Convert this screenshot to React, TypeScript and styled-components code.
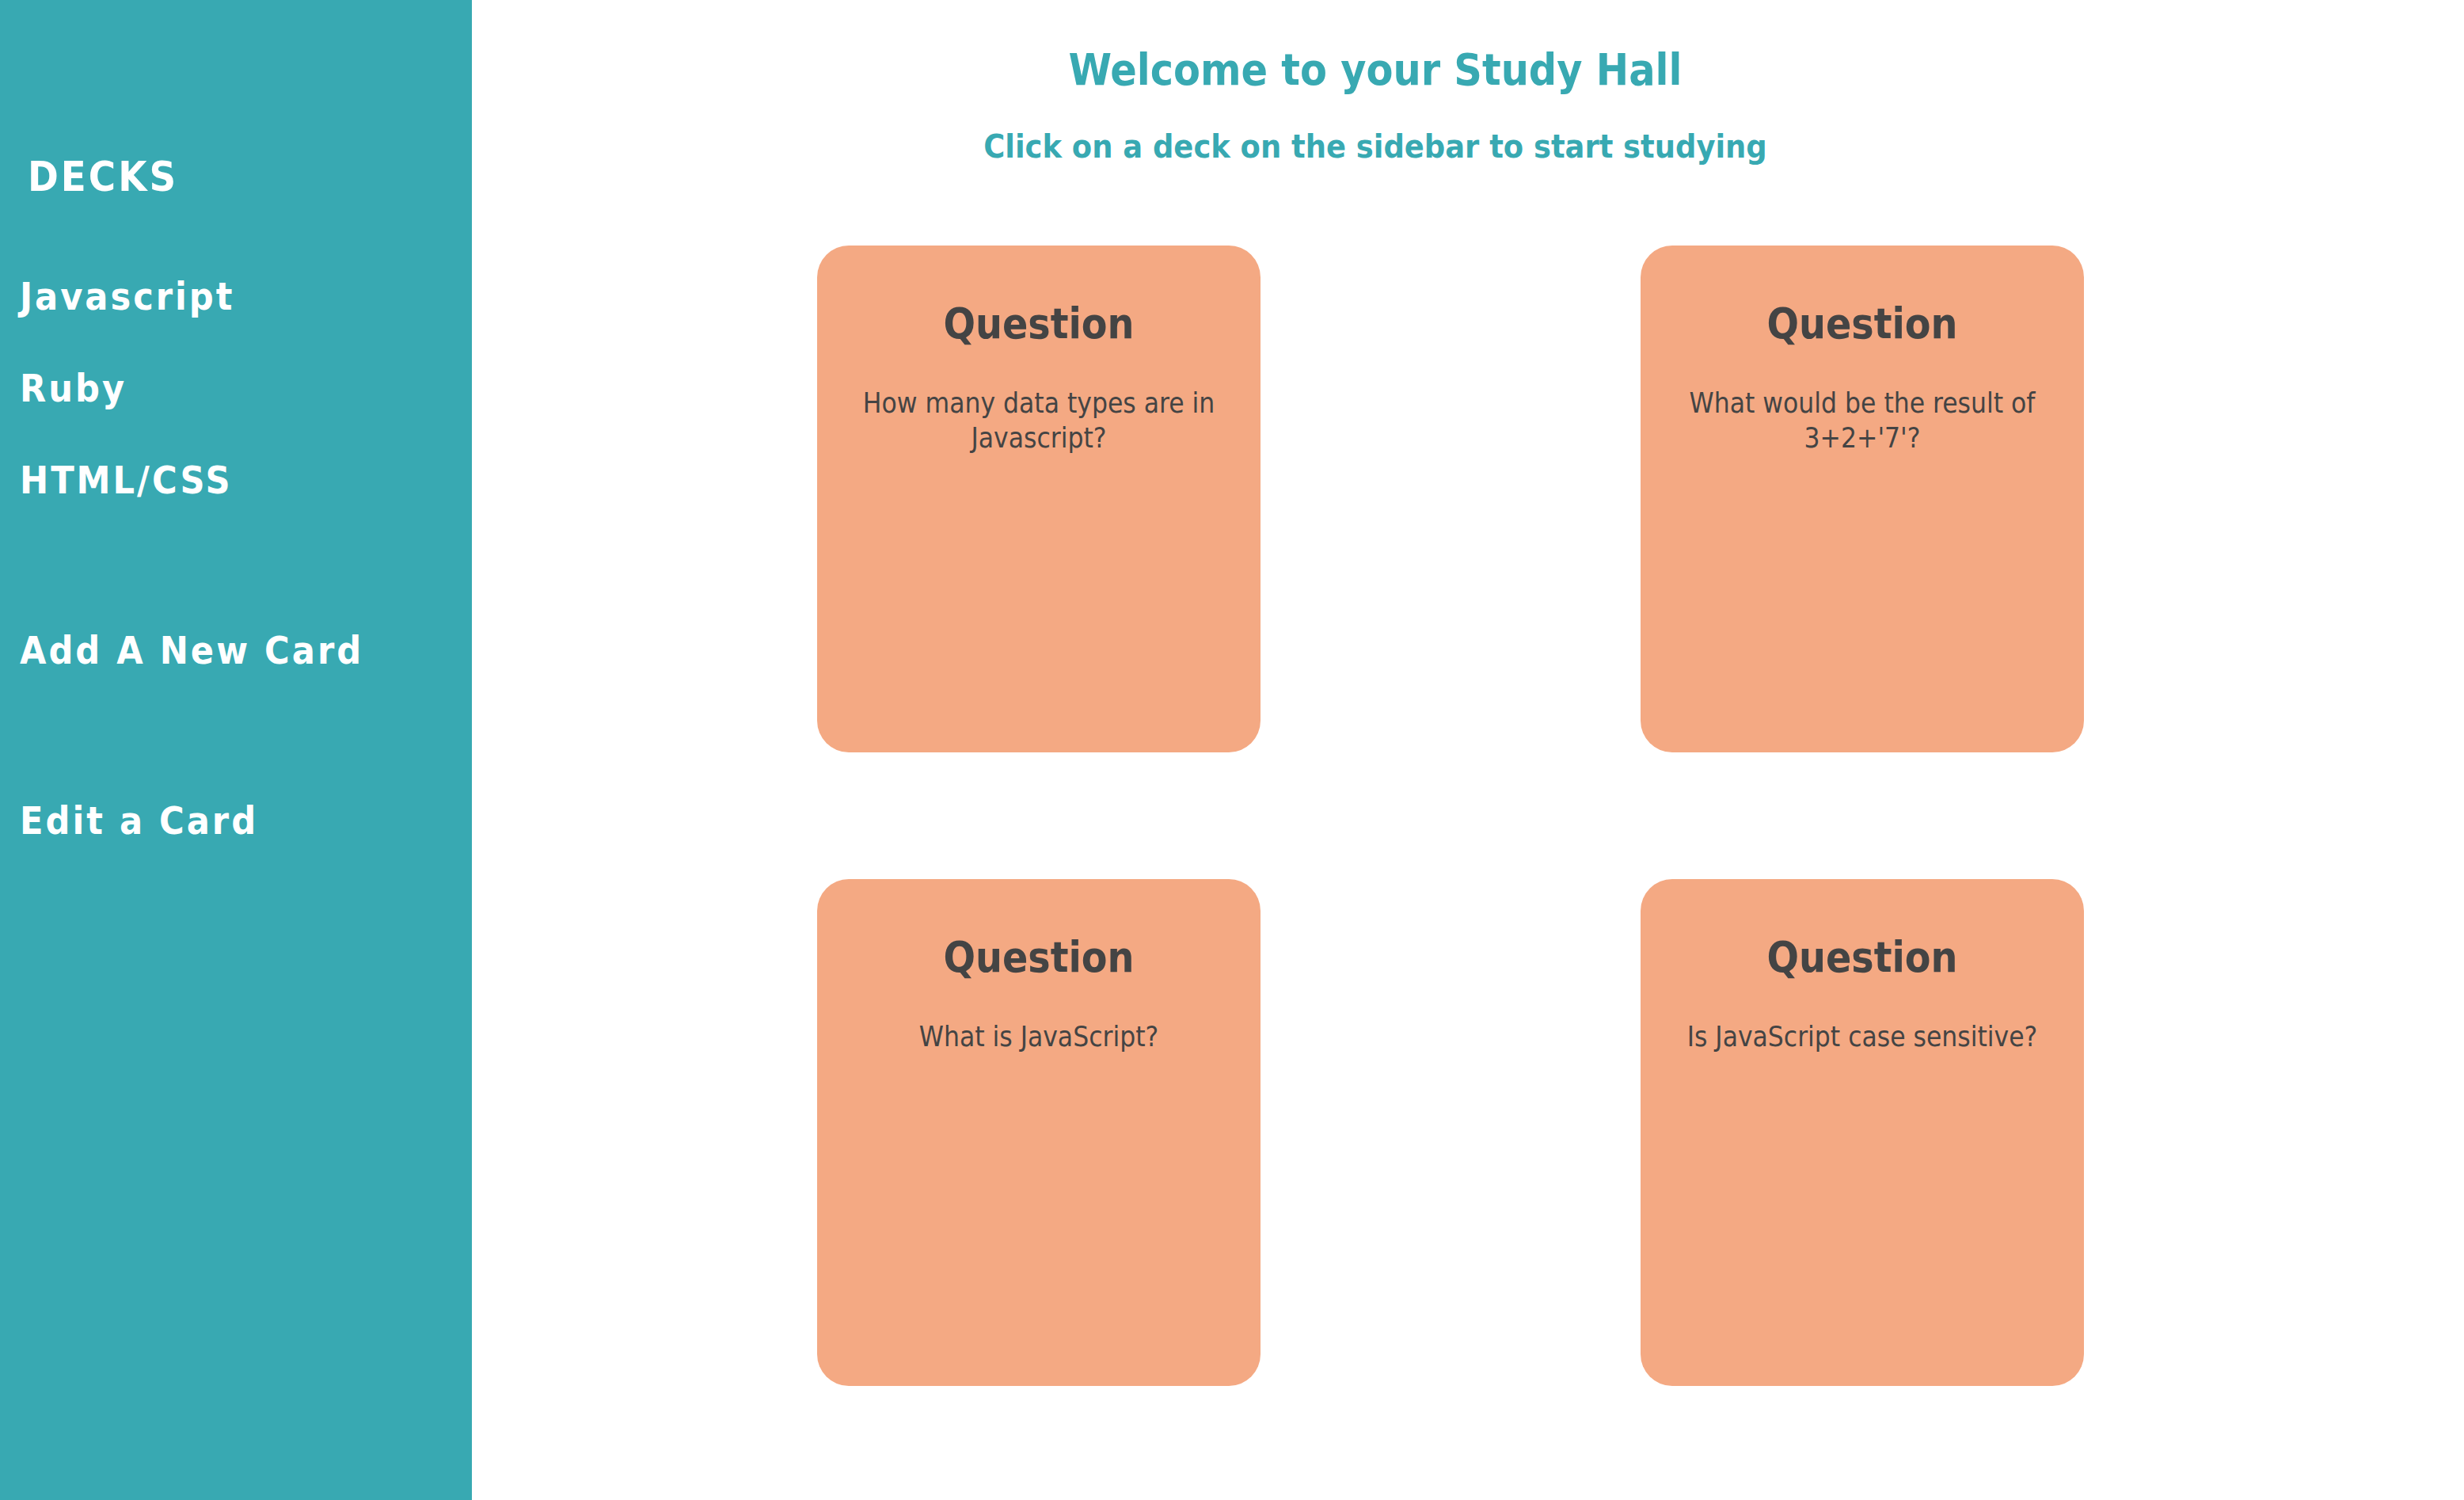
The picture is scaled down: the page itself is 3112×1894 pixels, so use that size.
import React from 'react';
import styled, { createGlobalStyle } from 'styled-components';

const teal = '#38a9b2';
const peach = '#f4a983';
const ink = '#444444';

const GlobalStyle = createGlobalStyle`
  *, *::before, *::after { box-sizing: border-box; }
  body {
    margin: 0;
    background: #ffffff;
    color: ${ink};
    font-family: Tahoma, "DejaVu Sans Condensed", "DejaVu Sans", sans-serif;
  }
  h1, h2, h3, p, ul { margin: 0; padding: 0; }
`;

const Page = styled.div`
  display: flex;
  min-height: 100vh;
`;

const Sidebar = styled.nav`
  flex: 0 0 596px;
  padding: 192px 25px 0;
  background: ${teal};
  color: #ffffff;
  letter-spacing: 3px;
`;

const SidebarTitle = styled.h2`
  padding-left: 10px;
  margin-bottom: 91px;
  font-size: 52px;
  line-height: 62px;
  font-weight: 700;
`;

const LinkGroup = styled.ul`
  display: flex;
  flex-direction: column;
  gap: 58px;
  margin-bottom: 157px;
  list-style: none;
`;

const SidebarLink = styled.a`
  display: block;
  color: inherit;
  font-size: 48px;
  line-height: 58px;
  font-weight: 700;
  text-decoration: none;
`;

const Main = styled.main`
  flex: 1;
  min-width: 0;
  padding: 53px 234px 80px 0;
`;

const Header = styled.header`
  display: flex;
  flex-direction: column;
  gap: 37px;
  margin-bottom: 100px;
  color: ${teal};
  text-align: center;
`;

const Title = styled.h1`
  font-size: 55px;
  line-height: 70px;
`;

const Subtitle = styled.h2`
  font-size: 41px;
  line-height: 50px;
`;

const CardGrid = styled.section`
  display: grid;
  grid-template-columns: 1fr 1fr;
  justify-items: center;
  row-gap: 160px;
  padding: 0 6px 0 196px;
`;

const Card = styled.article`
  display: flex;
  flex-direction: column;
  gap: 44px;
  width: 560px;
  min-height: 640px;
  padding: 65px 40px;
  border-radius: 40px;
  background: ${peach};
  text-align: center;
`;

const CardTitle = styled.h3`
  font-size: 53px;
  line-height: 68px;
`;

const CardText = styled.p`
  font-size: 35px;
  line-height: 44px;
`;

const linkGroups = [
  ['Javascript', 'Ruby', 'HTML/CSS'],
  ['Add A New Card'],
  ['Edit a Card'],
];

const questions = [
  'How many data types are in Javascript?',
  "What would be the result of 3+2+'7'?",
  'What is JavaScript?',
  'Is JavaScript case sensitive?',
];

export default function App() {
  return (
    <>
      <GlobalStyle />
      <Page>
        <Sidebar>
          <SidebarTitle>DECKS</SidebarTitle>
          {linkGroups.map((group) => (
            <LinkGroup key={group[0]}>
              {group.map((label) => (
                <li key={label}>
                  <SidebarLink href="#">{label}</SidebarLink>
                </li>
              ))}
            </LinkGroup>
          ))}
        </Sidebar>
        <Main>
          <Header>
            <Title>Welcome to your Study Hall</Title>
            <Subtitle>Click on a deck on the sidebar to start studying</Subtitle>
          </Header>
          <CardGrid>
            {questions.map((question) => (
              <Card key={question}>
                <CardTitle>Question</CardTitle>
                <CardText>{question}</CardText>
              </Card>
            ))}
          </CardGrid>
        </Main>
      </Page>
    </>
  );
}
